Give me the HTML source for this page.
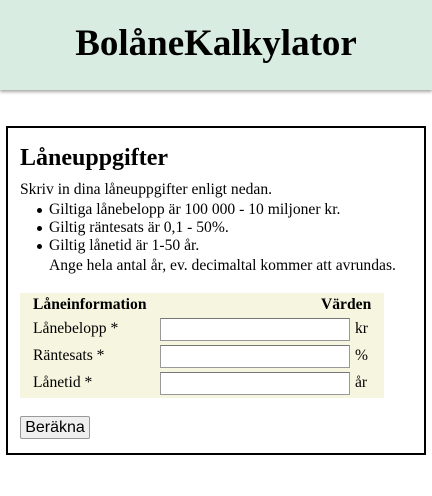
<!DOCTYPE html>
<html><head><meta charset="utf-8"><style>
body{margin:0;width:432px;height:496px;background:#fff;font-family:"Liberation Serif","Times New Roman",serif;font-size:15.6px;color:#000;position:relative;overflow:hidden}
.hdr{position:absolute;left:0;top:0;width:432px;height:90px;background:#d8ece2;box-shadow:0 2px 3px #aaa}
.hdr h1{margin:0;text-align:center;font-size:37px;line-height:88px;font-weight:bold}
.box{position:absolute;left:6px;top:126px;width:416px;height:325px;border:2px solid #000}
.a{position:absolute;white-space:nowrap;line-height:18px}
.tbl{position:absolute;left:20px;top:293px;width:364px;height:105px;background:#f5f5e0}
input{position:absolute;left:160px;width:190px;height:23px;box-sizing:border-box;border:1px solid #999;border-top-color:#777;background:#fff;margin:0;padding:0}
.btn{position:absolute;left:20px;top:416px;width:70px;height:23px;box-sizing:border-box;border:1px solid #999;border-radius:2px;background:#efefef;font-family:"Liberation Sans",sans-serif;font-size:16px;text-align:center;line-height:21px}
.dot{position:absolute;left:37px;width:5px;height:5px;border-radius:50%;background:#000}
</style></head><body>
<div class="hdr"><h1>BolåneKalkylator</h1></div>
<div class="box"></div>
<div class="a" style="left:20px;top:146px;font-size:24px;line-height:24px;font-weight:bold">Låneuppgifter</div>
<div class="a" style="left:20px;top:181px">Skriv in dina låneuppgifter enligt nedan.</div>
<div class="dot" style="top:208px"></div><div class="a" style="left:49px;top:201px">Giltiga lånebelopp är 100 000 - 10 miljoner kr.</div>
<div class="dot" style="top:226px"></div><div class="a" style="left:49px;top:219px">Giltig räntesats är 0,1 - 50%.</div>
<div class="dot" style="top:244px"></div><div class="a" style="left:49px;top:237px">Giltig lånetid är 1-50 år.</div>
<div class="a" style="left:49px;top:257px">Ange hela antal år, ev. decimaltal kommer att avrundas.</div>
<div class="tbl"></div>
<div class="a" style="left:33px;top:296px;font-weight:bold">Låneinformation</div>
<div class="a" style="left:321px;top:296px;font-weight:bold">Värden</div>
<div class="a" style="left:33px;top:320px">Lånebelopp *</div>
<div class="a" style="left:33px;top:347px">Räntesats *</div>
<div class="a" style="left:33px;top:374px">Lånetid *</div>
<input style="top:318px"><input style="top:345px"><input style="top:372px">
<div class="a" style="left:355px;top:320px">kr</div>
<div class="a" style="left:355px;top:347px">%</div>
<div class="a" style="left:355px;top:374px">år</div>
<div class="btn">Beräkna</div>
</body></html>
